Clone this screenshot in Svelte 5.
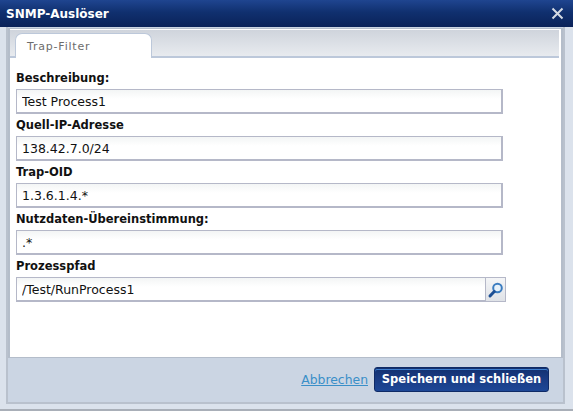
<script>
  const fields = [
    { label: "Beschreibung:", value: "Test Process1" },
    { label: "Quell-IP-Adresse", value: "138.42.7.0/24" },
    { label: "Trap-OID", value: "1.3.6.1.4.*" },
    { label: "Nutzdaten-Übereinstimmung:", value: ".*" }
  ];
</script>

<div class="dialog">
  <header>
    <h1>SNMP-Auslöser</h1>
    <button class="close" aria-label="Schließen">
      <svg width="13" height="13" viewBox="0 0 13 13">
        <path d="M1.5 1.5 L11.5 11.5 M11.5 1.5 L1.5 11.5" stroke="#d4dae4" stroke-width="2" fill="none" />
      </svg>
    </button>
  </header>

  <div class="outer">
    <div class="panel">
      <div class="tabs">
        <div class="tab">Trap-Filter</div>
      </div>
      <div class="content">
        {#each fields as field}
          <label>
            <span>{field.label}</span>
            <input type="text" value={field.value} />
          </label>
        {/each}
        <label>
          <span>Prozesspfad</span>
          <div class="picker">
            <input type="text" value="/Test/RunProcess1" />
            <button class="search" aria-label="Suchen">
              <svg width="18" height="18" viewBox="0 0 18 18">
                <circle cx="10.5" cy="7" r="4.3" fill="#e6f1fa" stroke="#3b7cc0" stroke-width="2" />
                <path d="M7.3 10.5 L3 15" stroke="#1d4f94" stroke-width="3" stroke-linecap="round" />
              </svg>
            </button>
          </div>
        </label>
      </div>
    </div>
    <footer>
      <a href="#cancel">Abbrechen</a>
      <button class="save">Speichern und schließen</button>
    </footer>
  </div>
</div>

<style>
  :global(body) {
    margin: 0;
    background: #fff;
  }

  .dialog {
    width: 573px;
    height: 411px;
    box-sizing: border-box;
    display: flex;
    flex-direction: column;
    font-family: "DejaVu Sans", Verdana, sans-serif;
    background: #dbe2ec;
    border-bottom: 2px solid #a9afb8;
    overflow: hidden;
  }

  header {
    height: 27px;
    flex: none;
    display: flex;
    align-items: center;
    justify-content: space-between;
    padding: 0 9px 0 6px;
    background: linear-gradient(#1f4590, #10306f 45%, #0a2259);
  }

  h1 {
    margin: 0;
    font-size: 12px;
    font-weight: bold;
    color: #fff;
  }

  .close {
    border: 0;
    background: none;
    padding: 0;
    height: 13px;
    cursor: pointer;
  }

  .outer {
    flex: 1;
    margin: 0 8px 5px 6px;
    display: flex;
    flex-direction: column;
    background: #cbd5e3;
    border: solid #b9c1cd;
    border-width: 0 2px 2px 2px;
    padding-top: 1px;
  }

  .panel {
    height: 330px;
    flex: none;
    box-sizing: border-box;
    display: flex;
    flex-direction: column;
    background: #fff;
    border: solid #b4bdca;
    border-width: 1px 2px 1px 2px;
  }

  .tabs {
    height: 28px;
    margin: 1px 2px 0 0;
    flex: none;
    box-sizing: border-box;
    display: flex;
    align-items: flex-end;
    padding-left: 5px;
    background: linear-gradient(#cfd4dc, #e8ebef);
    border-bottom: 2px solid #bcc8da;
  }

  .tab {
    width: 137px;
    height: 25px;
    margin-bottom: -2px;
    box-sizing: border-box;
    padding: 6px 0 0 11px;
    font-size: 11px;
    letter-spacing: 0.8px;
    color: #6c6c6c;
    background: #fff;
    border: 1px solid #bcc8da;
    border-bottom: 0;
    border-radius: 7px 7px 0 0;
  }

  .content {
    padding: 9px 6px 0;
    display: flex;
    flex-direction: column;
  }

  label {
    display: block;
    height: 47px;
  }

  label span {
    display: block;
    height: 22px;
    line-height: 22px;
    font-size: 11.5px;
    font-weight: bold;
    color: #111;
  }

  input {
    display: block;
    box-sizing: border-box;
    width: 487px;
    height: 25px;
    padding: 0 5px;
    margin: 0;
    font-family: inherit;
    font-size: 12.5px;
    color: #111;
    border: 1px solid #b5b8c8;
    border-width: 1px 2px 2px 1px;
    background: linear-gradient(#f3f5f5, #fff 40%);
    border-radius: 0;
    outline: none;
  }

  .picker {
    display: flex;
    width: 490px;
  }

  .picker input {
    flex: 1;
    width: auto;
    min-width: 0;
    border-right-width: 1px;
  }

  .search {
    width: 20px;
    height: 25px;
    padding: 0;
    box-sizing: border-box;
    display: flex;
    align-items: center;
    justify-content: center;
    background: linear-gradient(#f4f5f7, #dfe2e7);
    border: 1px solid #b5b8c8;
    border-left: 0;
  }

  footer {
    flex: 1;
    display: flex;
    align-items: center;
    justify-content: flex-end;
    gap: 6px;
    padding: 0 14px 2px 0;
  }

  a {
    font-size: 12.4px;
    color: #3a8fc8;
  }

  .save {
    width: 175px;
    height: 25px;
    padding: 0;
    font-family: inherit;
    font-size: 11.5px;
    font-weight: bold;
    color: #fff;
    background: linear-gradient(#12306f, #1a3c85 50%, #1d4796);
    border: 1px solid #0f2a66;
    border-radius: 3px;
    box-shadow: inset 0 1px 0 #12306f, inset 0 2px 0 #3f7fd0;
  }
</style>
